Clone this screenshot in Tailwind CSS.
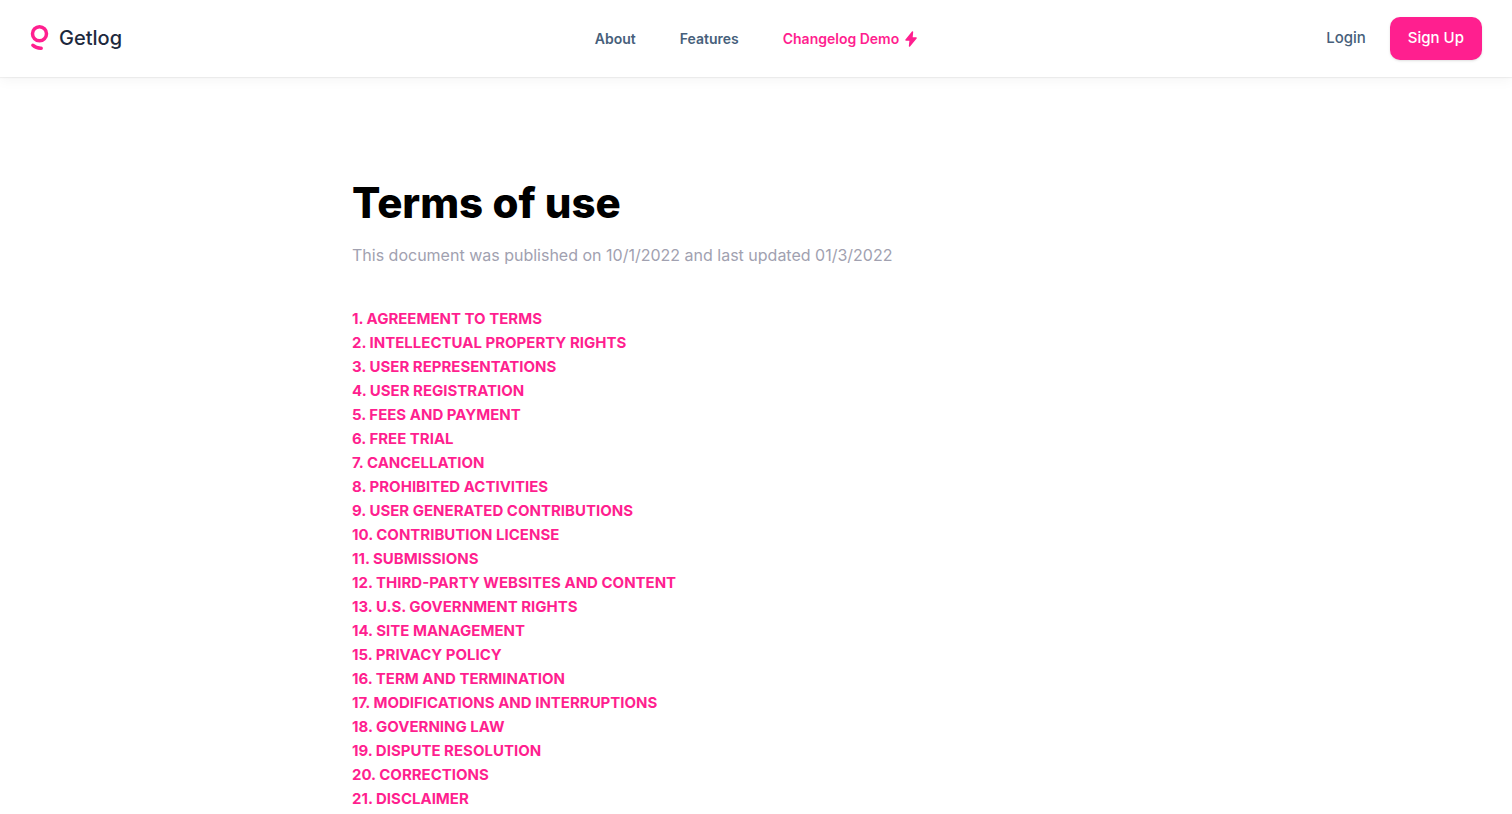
<!DOCTYPE html>
<html lang="en">
<head>
    <meta charset="UTF-8">
    <meta name="viewport" content="width=device-width, initial-scale=1.0">
    <title>Terms of use - Getlog</title>
    <script src="https://cdn.jsdelivr.net/npm/@tailwindcss/browser@4"></script>
</head>
<body class="bg-white font-['Inter',sans-serif] antialiased overflow-x-hidden">
    <!-- Header -->
    <header class="flex items-center justify-between px-[30px] py-[17px] shadow-[0_1px_1px_rgba(0,0,0,0.05),0_4px_12px_rgba(0,0,0,0.04)]">
        <div class="flex-1 flex">
            <a href="#" class="flex items-center gap-[10px] pb-[2px] text-xl font-medium text-slate-800">
                <svg class="w-[19px] h-[26px]" viewBox="0 0 19 26" fill="none" stroke="#ff1f8f" stroke-width="3.5" aria-hidden="true">
                    <circle cx="9.5" cy="8.800" r="7"/>
                    <path d="M2.900 20.300C5.200 22.500 8 23.300 11.200 23.200" stroke-linecap="round"/>
                </svg>
                Getlog
            </a>
        </div>
        <nav class="flex items-center gap-11 text-sm font-semibold text-[#475f7b]">
            <a href="#">About</a>
            <a href="#">Features</a>
            <a href="#" class="flex items-center gap-1.5 text-[#ff1f8f]">
                Changelog Demo
                <svg class="w-3 h-4" viewBox="0 0 12 16" fill="currentColor" stroke="currentColor" stroke-width="1.4" stroke-linejoin="round" aria-hidden="true">
                    <path d="M7.500 1L1 9h4.200L4.500 15l6.600-8H6.900z"/>
                </svg>
            </a>
        </nav>
        <div class="flex-1 flex items-center justify-end gap-6 text-[15px] font-medium">
            <a href="#" class="text-[#475f7b]">Login</a>
            <a href="#" class="flex items-center h-[43px] px-[18px] rounded-[10px] bg-[#ff1f8f] text-white shadow-sm">Sign Up</a>
        </div>
    </header>

    <!-- Terms -->
    <main class="max-w-[808px] mx-auto pt-[100px] pb-20">
        <h1 class="text-[42px] leading-[52px] font-extrabold text-black">Terms of use</h1>
        <p class="mt-3 leading-7 text-[#a1a1b0]">This document was published on 10/1/2022 and last updated 01/3/2022</p>
        <ul class="mt-[38px] text-[15px] leading-6 font-bold text-[#ff1f8f]">
            <li><a href="#agreement">1. AGREEMENT TO TERMS</a></li>
            <li><a href="#ip">2. INTELLECTUAL PROPERTY RIGHTS</a></li>
            <li><a href="#userreps">3. USER REPRESENTATIONS</a></li>
            <li><a href="#userreg">4. USER REGISTRATION</a></li>
            <li><a href="#payment">5. FEES AND PAYMENT</a></li>
            <li><a href="#freetrial">6. FREE TRIAL</a></li>
            <li><a href="#cancel">7. CANCELLATION</a></li>
            <li><a href="#prohibited">8. PROHIBITED ACTIVITIES</a></li>
            <li><a href="#ugc">9. USER GENERATED CONTRIBUTIONS</a></li>
            <li><a href="#license">10. CONTRIBUTION LICENSE</a></li>
            <li><a href="#submissions">11. SUBMISSIONS</a></li>
            <li><a href="#thirdparty">12. THIRD-PARTY WEBSITES AND CONTENT</a></li>
            <li><a href="#usgov">13. U.S. GOVERNMENT RIGHTS</a></li>
            <li><a href="#sitemanage">14. SITE MANAGEMENT</a></li>
            <li><a href="#privacy">15. PRIVACY POLICY</a></li>
            <li><a href="#terms">16. TERM AND TERMINATION</a></li>
            <li><a href="#modifications">17. MODIFICATIONS AND INTERRUPTIONS</a></li>
            <li><a href="#law">18. GOVERNING LAW</a></li>
            <li><a href="#disputes">19. DISPUTE RESOLUTION</a></li>
            <li><a href="#corrections">20. CORRECTIONS</a></li>
            <li><a href="#disclaimer">21. DISCLAIMER</a></li>
        </ul>
    </main>
</body>
</html>
